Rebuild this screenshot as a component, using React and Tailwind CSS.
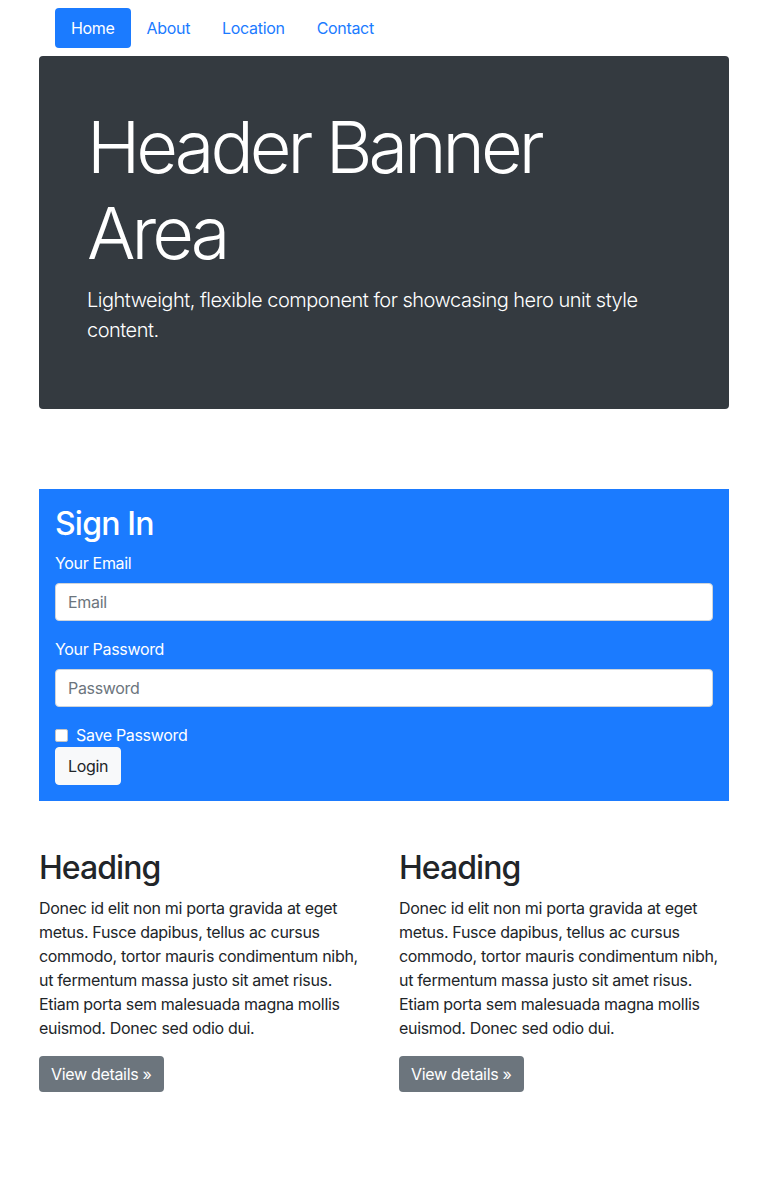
import React from 'react';

const font = { fontFamily: 'Inter, "Noto Sans", "Liberation Sans", sans-serif' };

const navLinks = ['Home', 'About', 'Location', 'Contact'];

const blurb =
  'Donec id elit non mi porta gravida at eget metus. Fusce dapibus, tellus ac cursus commodo, tortor mauris condimentum nibh, ut fermentum massa justo sit amet risus. Etiam porta sem malesuada magna mollis euismod. Donec sed odio dui.';

function Nav() {
  return (
    <ul className="flex px-4 py-2">
      {navLinks.map((label, i) => (
        <li key={label}>
          <a
            href="#"
            className={`block rounded px-4 py-2 text-base leading-6 ${
              i === 0 ? 'bg-[#1b7bff] text-white' : 'text-[#1b7bff]'
            }`}
          >
            {label}
          </a>
        </li>
      ))}
    </ul>
  );
}

function Banner() {
  return (
    <div className="rounded bg-[#343a40] p-12 text-white">
      <h1 className="mb-2 text-[72px] font-light leading-[1.2] tracking-[-0.055em]">
        Header Banner Area
      </h1>
      <p className="mb-4 text-xl font-light leading-[30px] tracking-[-0.025em]">
        Lightweight, flexible component for showcasing hero unit style content.
      </p>
    </div>
  );
}

function SignIn() {
  return (
    <form className="mt-20 mb-12 bg-[#1b7bff] p-4 text-white">
      <h2 className="mb-2 text-[32px] font-medium leading-[1.2] tracking-[-0.025em]">Sign In</h2>
      <div className="mb-4">
        <label className="mb-2 block leading-6">Your Email</label>
        <input
          type="email"
          placeholder="Email"
          className="block h-[38px] w-full rounded border border-[#ced4da] bg-white px-3 text-base text-[#495057] placeholder:text-[#6c757d]"
        />
      </div>
      <div className="mb-4">
        <label className="mb-2 block leading-6">Your Password</label>
        <input
          type="password"
          placeholder="Password"
          className="block h-[38px] w-full rounded border border-[#ced4da] bg-white px-3 text-base text-[#495057] placeholder:text-[#6c757d]"
        />
      </div>
      <label className="flex items-center gap-2 leading-6">
        <span className="inline-block h-[13px] w-[13px] rounded-[2px] border border-[#c4c4c4] bg-white" />
        Save Password
      </label>
      <button
        type="button"
        className="rounded border border-[#f8f9fa] bg-[#f8f9fa] px-3 py-1.5 leading-6 text-[#212529]"
      >
        Login
      </button>
    </form>
  );
}

function Column() {
  return (
    <div className="px-[15px]">
      <h2 className="mb-2 text-[32px] font-medium leading-[1.2] tracking-[-0.03em] text-[#212529]">
        Heading
      </h2>
      <p className="mb-4 leading-6 text-[#212529]">{blurb}</p>
      <a
        href="#"
        className="inline-block rounded bg-[#6c757d] px-3 py-1.5 leading-6 text-white"
      >
        View details »
      </a>
    </div>
  );
}

export default function App() {
  return (
    <div
      className="min-h-[1188px] bg-white text-base tracking-[-0.02em] text-[#212529]"
      style={font}
    >
      <div className="mx-auto w-[720px] px-[15px]">
        <Nav />
        <Banner />
        <SignIn />
        <div className="mx-[-15px] grid grid-cols-2">
          <Column />
          <Column />
        </div>
      </div>
    </div>
  );
}
